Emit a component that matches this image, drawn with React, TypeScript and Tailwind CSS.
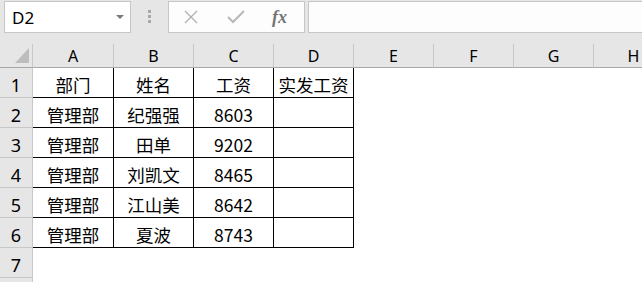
import React from "react";

const cols = ["A", "B", "C", "D", "E", "F", "G", "H"];
const data: string[][] = [
  ["部门", "姓名", "工资", "实发工资"],
  ["管理部", "纪强强", "8603", ""],
  ["管理部", "田单", "9202", ""],
  ["管理部", "刘凯文", "8465", ""],
  ["管理部", "江山美", "8642", ""],
  ["管理部", "夏波", "8743", ""],
];

const font = { fontFamily: '"Noto Sans CJK SC", "Noto Sans", sans-serif' };

export default function App() {
  return (
    <div
      className="w-[642px] h-[282px] overflow-hidden bg-[#e6e6e6] text-black"
      style={{ fontFamily: '"Noto Sans", "Noto Sans CJK SC", sans-serif' }}
    >
      {/* top bar */}
      <div className="flex h-[44px] pt-[1px]">
        <div className="ml-[4px] w-[127px] h-[32px] bg-white border border-[#c6c6c6] flex items-center pl-[7px] pr-[6px]">
          <span className="text-[17px] leading-none flex-1">D2</span>
          <svg width="8" height="4" viewBox="0 0 8 4">
            <path d="M0 0 L8 0 L4 4 Z" fill="#7a7a7a" />
          </svg>
        </div>
        <div className="w-[37px] flex flex-col items-center pt-[9px] gap-[2px]">
          <div className="w-[3px] h-[3px] bg-[#a8a8a8]" />
          <div className="w-[3px] h-[3px] bg-[#a8a8a8]" />
          <div className="w-[3px] h-[3px] bg-[#a8a8a8]" />
        </div>
        <div className="w-[137px] h-[32px] bg-[#fdfdfd] border border-[#c6c6c6] flex items-center">
          <svg className="ml-[14px]" width="16" height="16" viewBox="0 0 16 16">
            <path d="M2 2 L14 14 M14 2 L2 14" stroke="#b0b0b0" strokeWidth="1.3" fill="none" />
          </svg>
          <svg className="ml-[28px]" width="18" height="14" viewBox="0 0 18 14">
            <path d="M1 7 L6 12 L17 1" stroke="#b8b8b8" strokeWidth="2" fill="none" />
          </svg>
          <span
            className="ml-[27px] text-[18px] italic font-bold text-[#757575] leading-none"
            style={{ fontFamily: '"Liberation Serif", serif' }}
          >
            fx
          </span>
        </div>
        <div className="ml-[3px] flex-1 h-[32px] bg-[#fdfdfd] border border-[#c6c6c6] border-r-0" />
      </div>

      {/* grid */}
      <div
        className="grid"
        style={{ gridTemplateColumns: "33px 81px repeat(7, 80px)", gridTemplateRows: "24px repeat(8, 30px)" }}
      >
        {/* corner */}
        <div className="relative border-r border-b border-r-[#c8c8c8] border-b-[#a8a8a8]">
          <svg className="absolute left-[15px] top-[4px]" width="14" height="15" viewBox="0 0 14 15">
            <path d="M14 0 L14 15 L0 15 Z" fill="#bdbdbd" />
          </svg>
        </div>
        {cols.map((c) => (
          <div
            key={c}
            className="border-r border-b border-r-[#c8c8c8] border-b-[#a8a8a8] flex items-center justify-center text-[16px] leading-none pt-[1px]"
          >
            {c}
          </div>
        ))}
        {Array.from({ length: 8 }).map((_, r) => (
          <React.Fragment key={r}>
            <div className="border-r border-b border-r-[#c8c8c8] border-b-[#c8c8c8] flex items-end justify-center pb-[3px] text-[18px] leading-none">
              {r < 7 ? r + 1 : ""}
            </div>
            {cols.map((c, ci) => {
              const inTable = r < 6 && ci < 4;
              const v = inTable ? data[r][ci] : "";
              return (
                <div
                  key={c}
                  className={
                    inTable
                      ? "bg-white border-r border-b border-black flex items-end justify-center pb-[4px] text-[17.5px] leading-none"
                      : "bg-white"
                  }
                  style={font}
                >
                  {v}
                </div>
              );
            })}
          </React.Fragment>
        ))}
      </div>
    </div>
  );
}
